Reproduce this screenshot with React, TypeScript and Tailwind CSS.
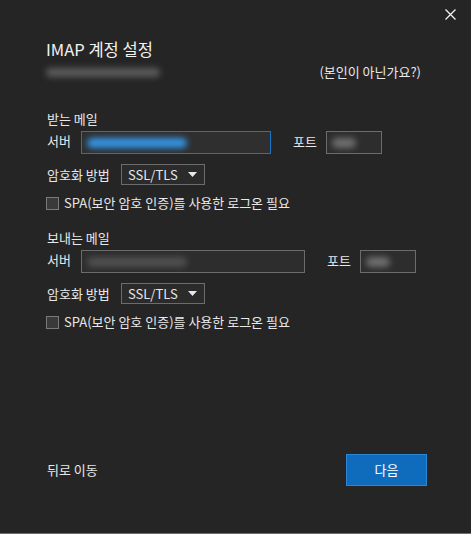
const font = { fontFamily: '"Noto Sans CJK KR", "Noto Sans", sans-serif' }

function Blur({ w, color }: { w: number; color: string }) {
  return (
    <div className="flex items-center h-full pl-[5px]">
      <div className={`h-[10px] rounded-full blur-[3px] ${color}`} style={{ width: w }} />
    </div>
  )
}

function Caret() {
  return (
    <svg width="9" height="5" viewBox="0 0 9 5">
      <path d="M0 0 L9 0 L4.5 5 Z" fill="#e8e8e8" />
    </svg>
  )
}

function CloseIcon() {
  return (
    <svg width="11" height="11" viewBox="0 0 11 11">
      <path d="M0.5 0.5 L10.5 10.5 M10.5 0.5 L0.5 10.5" stroke="#f2f2f2" strokeWidth="1.3" />
    </svg>
  )
}

function Section({
  title,
  serverW,
  focused,
  serverBlur,
}: {
  title: string
  serverW: string
  focused?: boolean
  serverBlur: string
}) {
  return (
    <div className="flex flex-col">
      <div className="h-[18px] leading-[18px] pl-px">{title}</div>
      <div className="flex items-start mt-[3px] h-[23px]">
        <div className="w-[35px] pl-px leading-[20px]">서버</div>
        <div
          className={`${serverW} h-[23px] border ${
            focused ? 'border-[#1a74c9] bg-[#2f2f2f]' : 'border-[#6c6c6c] bg-[#2d2d2d]'
          }`}
        >
          <Blur w={100} color={serverBlur} />
        </div>
        <div className="ml-[22px] w-[33px] leading-[22px]">포트</div>
        <div className="w-[56px] h-[23px] border border-[#6c6c6c] bg-[#2d2d2d]">
          <Blur w={24} color="bg-[#707070]" />
        </div>
      </div>
      <div className="flex items-center mt-[10px] h-[21px]">
        <div className="w-[75px] pl-px">암호화 방법</div>
        <div className="w-[84px] h-[21px] border border-[#6c6c6c] bg-[#2b2b2b] flex items-center justify-between pl-[6px] pr-[7px]">
          <span className="text-[13px]">SSL/TLS</span>
          <Caret />
        </div>
      </div>
      <div className="flex items-center mt-[11px] h-[14px]">
        <div className="w-[13px] h-[13px] border border-[#7a7a7a] bg-[#3a3a3a]" />
        <span className="ml-[5px]">SPA(보안 암호 인증)를 사용한 로그온 필요</span>
      </div>
    </div>
  )
}

export default function App() {
  return (
    <div
      style={font}
      className="w-[471px] h-[534px] bg-[#252525] border-b border-[#6d6d6d] flex flex-col text-[#e8e8e8] text-[13px]"
    >
      <div className="h-[37px] flex justify-end items-start pt-[9px] pr-[15px]">
        <CloseIcon />
      </div>
      <div className="flex flex-col px-[46px] flex-1">
        <div className="h-[24px] leading-[24px] text-[16.5px] text-[#f2f2f2]">IMAP 계정 설정</div>
        <div className="flex items-center justify-between mt-px h-[20px] pr-[4px]">
          <div className="h-[9px] w-[114px] rounded-full bg-[#5c5c5c] blur-[3px]" />
          <span>(본인이 아닌가요?)</span>
        </div>
        <div className="mt-[28px]">
          <Section title="받는 메일" serverW="w-[190px]" focused serverBlur="bg-[#3496e8]" />
        </div>
        <div className="mt-[19px]">
          <Section title="보내는 메일" serverW="w-[224px]" serverBlur="bg-[#505050]" />
        </div>
        <div className="flex-1" />
        <div className="flex items-center justify-between pb-[47px] -mr-[2px]">
          <span className="pl-px">뒤로 이동</span>
          <button className="w-[81px] h-[32px] bg-[#0f6cbd] border border-[#2b86d6] text-white">
            다음
          </button>
        </div>
      </div>
    </div>
  )
}
